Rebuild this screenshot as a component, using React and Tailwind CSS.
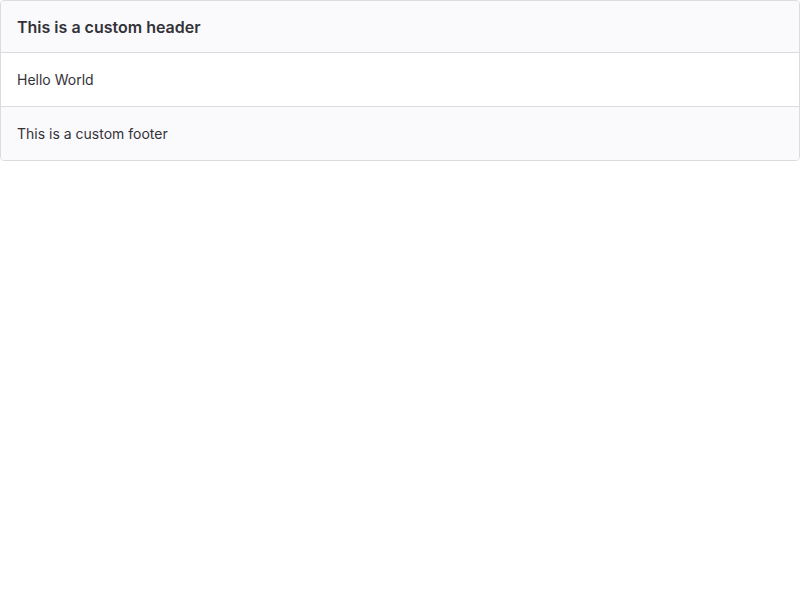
import React from 'react';

const App = () => {
  return (
    <div className="w-[800px] bg-white" style={{ fontFamily: 'Inter, "Noto Sans", sans-serif' }}>
      <div className="border border-[#dcdcdf] rounded-[4px] overflow-hidden text-[#333238]">
        <div className="h-[52px] flex items-center px-4 bg-[#fafafc] border-b border-[#dcdcdf]">
          <h3 className="text-[16px] font-semibold">This is a custom header</h3>
        </div>
        <div className="h-[54px] flex items-center px-4 bg-white border-b border-[#dcdcdf]">
          <p className="text-[14px]">Hello World</p>
        </div>
        <div className="h-[53px] flex items-center px-4 bg-[#fafafc]">
          <p className="text-[14px]">This is a custom footer</p>
        </div>
      </div>
    </div>
  );
};

export default App;
